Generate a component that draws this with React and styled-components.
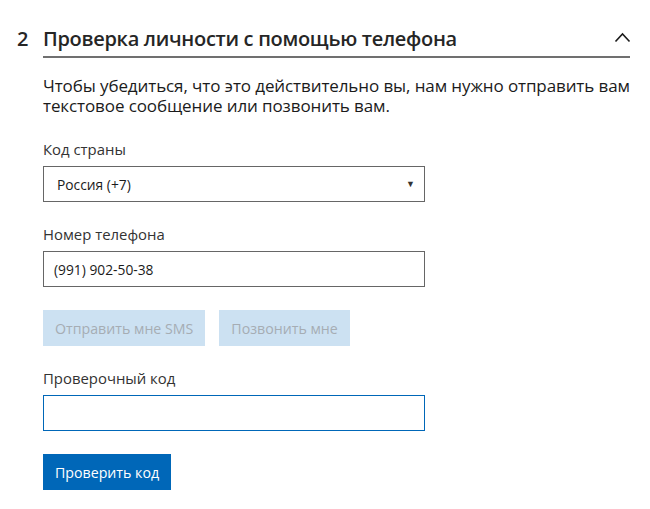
import React from "react";
import styled, { createGlobalStyle } from "styled-components";

const Global = createGlobalStyle`
  body {
    margin: 0;
    background: #fff;
    font-family: "Open Sans", "Noto Sans", sans-serif;
    color: #000;
  }
`;

const Page = styled.div`
  width: 650px;
  padding: 20px 20px 0 17px;
  box-sizing: border-box;
`;

const Header = styled.div`
  display: flex;
  align-items: flex-start;
`;

const StepNum = styled.div`
  width: 26px;
  font-size: 20px;
  font-weight: 600;
  line-height: 38px;
  color: #262626;
`;

const TitleBar = styled.div`
  flex: 1;
  display: flex;
  align-items: center;
  justify-content: space-between;
  height: 36px;
  border-bottom: 2px solid #707070;
`;

const Title = styled.h2`
  margin: 0;
  font-size: 20px;
  font-weight: 600;
  letter-spacing: -0.3px;
  color: #262626;
`;

const Body = styled.div`
  padding-left: 26px;
`;

const Intro = styled.p`
  margin: 18px -20px 0 0;
  font-size: 17px;
  line-height: 20px;
  letter-spacing: -0.1px;
  color: #1b1b1b;
`;

const Label = styled.div`
  margin-top: ${p => p.$top || 20}px;
  font-size: 14.9px;
  line-height: 20px;
  color: #333;
`;

const Field = styled.div`
  position: relative;
  margin-top: 7px;
  width: 382px;
  height: 36px;
  box-sizing: border-box;
  border: 1px solid ${p => (p.$focus ? "#0067b8" : "#666")};
  display: flex;
  align-items: center;
  padding-left: ${p => p.$pad || 10}px;
  font-size: 13.8px;
  color: #1b1b1b;
`;

const Arrow = styled.span`
  position: absolute;
  right: 9px;
  top: 10px;
  font-size: 9px;
  color: #333;
`;

const ButtonRow = styled.div`
  display: flex;
  gap: 14px;
  margin-top: 23px;
`;

const Btn = styled.button`
  height: 36px;
  padding: 0 ${p => p.$px || 12}px;
  border: none;
  font-family: inherit;
  font-size: 14.2px;
  background: ${p => (p.$primary ? "#0067b8" : "#cce1f2")};
  color: ${p => (p.$primary ? "#fff" : "#a6adb4")};
  cursor: ${p => (p.$primary ? "pointer" : "default")};
`;

const Submit = styled(Btn)`
  margin-top: 23px;
`;

const Chevron = () => (
  <svg width="17" height="11" viewBox="0 0 17 11" style={{ marginBottom: 2, marginRight: -1 }}>
    <path d="M1.5 9.5 L8.5 2 L15.5 9.5" fill="none" stroke="#1b1b1b" strokeWidth="1.6" />
  </svg>
);

export default function App() {
  return (
    <Page>
      <Global />
      <Header>
        <StepNum>2</StepNum>
        <TitleBar>
          <Title>Проверка личности с помощью телефона</Title>
          <Chevron />
        </TitleBar>
      </Header>
      <Body>
        <Intro>
          Чтобы убедиться, что это действительно вы, нам нужно отправить вам текстовое
          сообщение или позвонить вам.
        </Intro>
        <Label $top={23}>Код страны</Label>
        <Field $pad={13}>
          Россия (+7)
          <Arrow>▼</Arrow>
        </Field>
        <Label $top={22}>Номер телефона</Label>
        <Field>(991) 902-50-38</Field>
        <ButtonRow>
          <Btn disabled>Отправить мне SMS</Btn>
          <Btn disabled>Позвонить мне</Btn>
        </ButtonRow>
        <Label $top={22}>Проверочный код</Label>
        <Field $focus />
        <Submit $primary>Проверить код</Submit>
      </Body>
    </Page>
  );
}
